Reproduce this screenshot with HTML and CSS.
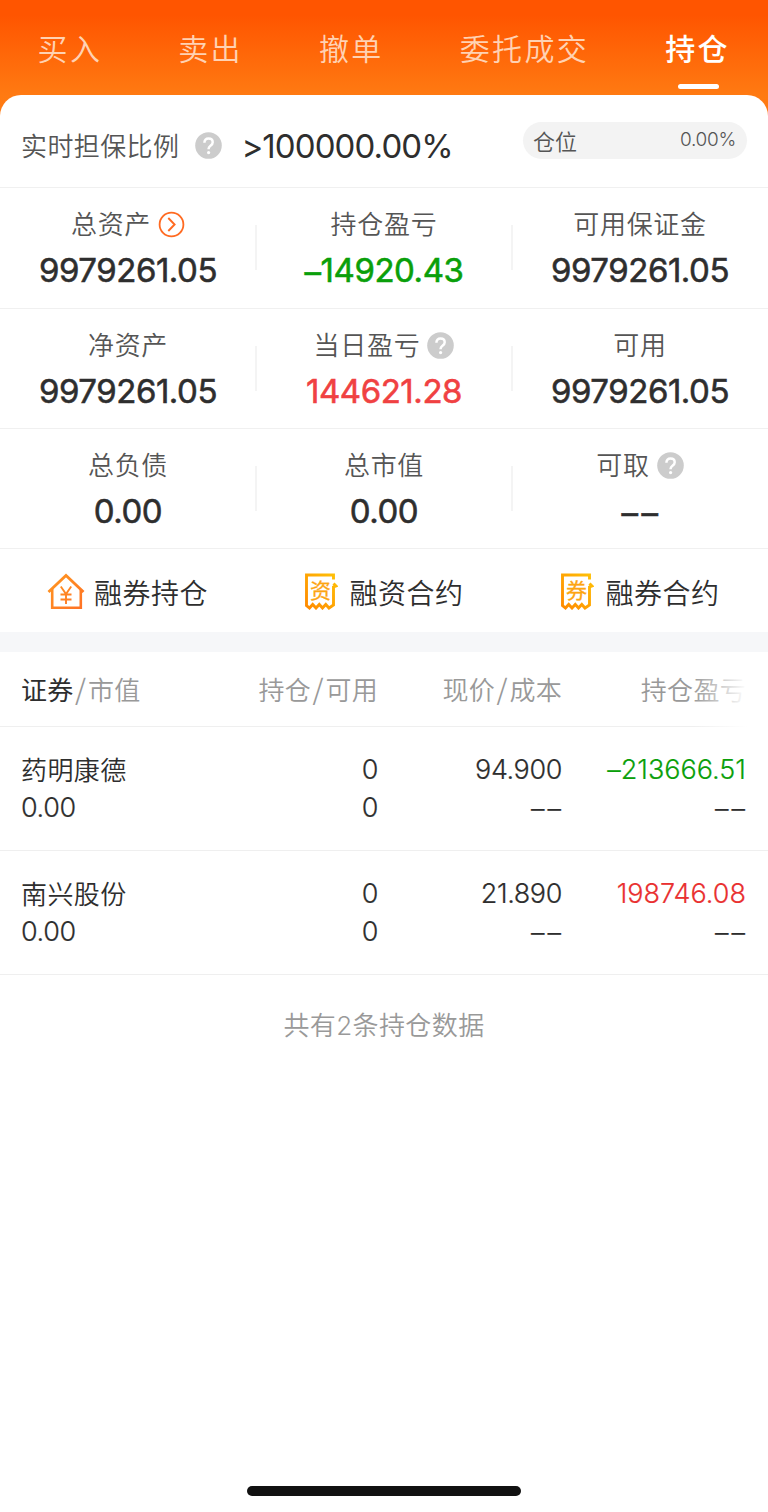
FILE: index.html
```html
<!DOCTYPE html>
<html lang="zh-CN">
<head>
<meta charset="utf-8">
<title>持仓</title>
<link rel="stylesheet" href="styles.css">
</head>
<body>
<svg class="defs" width="0" height="0" aria-hidden="true">
  <defs>
    <linearGradient id="gold" x1="0" y1="1" x2="1" y2="0"><stop offset="0" stop-color="#ff8a00"/><stop offset="1" stop-color="#ffc107"/></linearGradient>
    <linearGradient id="orange" gradientUnits="userSpaceOnUse" x1="0" y1="0" x2="38" y2="38"><stop offset="0" stop-color="#ff9a1f"/><stop offset="1" stop-color="#ff7026"/></linearGradient>
    <symbol id="help" viewBox="0 0 27 27">
      <circle cx="13.5" cy="13.5" r="13.3" fill="#ccc"/>
      <path d="M9.400 10.800C9.400 8.100 11 6.600 13.500 6.600c2.500 0 4.200 1.500 4.200 3.600 0 1.700-.9 2.600-2.200 3.500-1.400 1-1.900 1.600-1.900 3v.5" fill="none" stroke="#fff" stroke-width="2.500"/>
      <circle cx="13.600" cy="20.600" r="1.600" fill="#fff"/>
    </symbol>
    <symbol id="ticket" viewBox="0 0 34 38">
      <path d="M29.500 7.500V3H2.500V33.500L5.500 36l3.200-3.500L12 36l3.300-3.500L18.500 36l3.300-3.500L25 36l4.500-3V15l2.500-1-2.500-2.500" fill="none" stroke="url(#gold)" stroke-width="2.900"/>
    </symbol>
  </defs>
</svg>
<div class="page">
  <nav class="tabs">
    <span class="tab">买入</span>
    <span class="tab">卖出</span>
    <span class="tab">撤单</span>
    <span class="tab">委托成交</span>
    <span class="tab active">持仓</span>
  </nav>
  <main class="card">
    <section class="ratio">
      <span class="ratio-label">实时担保比例</span>
      <svg class="help" width="27" height="27"><use href="#help"/></svg>
      <span class="ratio-value">&gt;100000.00%</span>
      <div class="pill"><span class="pill-name">仓位</span><span class="pill-value">0.00%</span></div>
    </section>
    <section class="stats">
      <div class="stat"><div class="label"><span>总资产</span><svg class="arrow" width="27" height="27" viewBox="0 0 27 27"><circle cx="13.500" cy="13.500" r="11.900" fill="none" stroke="#ff6a21" stroke-width="1.800"/><path d="M10.300 7l6.300 6.500-6.300 6.500" fill="none" stroke="#ff6a21" stroke-width="1.900"/></svg></div><div class="value">9979261.05</div></div>
      <div class="stat"><div class="label"><span>持仓盈亏</span></div><div class="value down"><span class="minus">–</span>14920.43</div></div>
      <div class="stat"><div class="label"><span>可用保证金</span></div><div class="value">9979261.05</div></div>
    </section>
    <section class="stats">
      <div class="stat"><div class="label"><span>净资产</span></div><div class="value">9979261.05</div></div>
      <div class="stat"><div class="label"><span>当日盈亏</span><svg class="help" width="27" height="27"><use href="#help"/></svg></div><div class="value up">144621.28</div></div>
      <div class="stat"><div class="label"><span>可用</span></div><div class="value">9979261.05</div></div>
    </section>
    <section class="stats">
      <div class="stat"><div class="label"><span>总负债</span></div><div class="value">0.00</div></div>
      <div class="stat"><div class="label"><span>总市值</span></div><div class="value">0.00</div></div>
      <div class="stat"><div class="label"><span>可取</span><svg class="help" width="27" height="27"><use href="#help"/></svg></div><div class="value dash"><span class="minus">––</span></div></div>
    </section>
    <section class="actions">
      <div class="action house">
        <svg width="38" height="38" viewBox="0 0 38 38"><path d="M1.500 20L19 3.500 36.500 20" fill="none" stroke="url(#orange)" stroke-width="2.800"/><path d="M5.200 17v18.700h28.600V17" fill="none" stroke="url(#orange)" stroke-width="2.600"/><path d="M13.800 14.500l5.200 7.500 5.200-7.500M19 22v10M13.500 22.500h11M13.500 27.500h11" fill="none" stroke="url(#orange)" stroke-width="1.900"/></svg>
        <span>融券持仓</span>
      </div>
      <div class="action">
        <svg class="ticket" width="34" height="38" viewBox="0 0 34 38"><use href="#ticket"/><text class="ticket-text" x="16.500" y="25.500">资</text></svg>
        <span>融资合约</span>
      </div>
      <div class="action">
        <svg class="ticket" width="34" height="38" viewBox="0 0 34 38"><use href="#ticket"/><text class="ticket-text" x="16.500" y="25.500">券</text></svg>
        <span>融券合约</span>
      </div>
    </section>
  </main>
  <section class="holdings">
    <div class="row head">
      <span><b>证券</b><i>/</i>市值</span><span>持仓<i>/</i>可用</span><span>现价<i>/</i>成本</span><span>持仓盈亏</span>
    </div>
    <div class="row item">
      <div><p class="name">药明康德</p><p>0.00</p></div>
      <div><p>0</p><p>0</p></div>
      <div><p>94.900</p><p class="dash">––</p></div>
      <div><p class="down"><span class="minus">–</span>213666.51</p><p class="dash">––</p></div>
    </div>
    <div class="row item">
      <div><p class="name">南兴股份</p><p>0.00</p></div>
      <div><p>0</p><p>0</p></div>
      <div><p>21.890</p><p class="dash">––</p></div>
      <div><p class="up">198746.08</p><p class="dash">––</p></div>
    </div>
    <p class="total">共有2条持仓数据</p>
  </section>
  <div class="home-bar"></div>
</div>
</body>
</html>
```
FILE: styles.css
```css
* { box-sizing: border-box; }
body { margin: 0; background: #fff; }
p { margin: 0; }
b, i { font-style: normal; font-weight: inherit; }
.defs { display: block; }
.page {
  width: 768px; height: 1512px; display: flex; flex-direction: column; overflow: hidden;
  font-family: Inter, "Noto Sans CJK SC", sans-serif; font-weight: 350; color: #2e2e2e;
  background: linear-gradient(#ff5500 0, #ff5500 15px, #ff7a12 95px, #ff7c14 125px, #fff 125px);
}
.tabs {
  height: 95px; flex: none; padding: 0 38px 0 37.500px; display: flex; justify-content: space-between;
  font-size: 30px; line-height: 99px; letter-spacing: 2.4px; color: #ffd2b3; white-space: nowrap;
}
.tab.active { color: #fff; font-weight: 500; position: relative; }
.tab.active::after {
  content: ""; position: absolute; left: 13px; top: 84px; width: 41px; height: 5px;
  border-radius: 3px; background: #fff;
}
.card { flex: none; background: #fff; border-radius: 21px 21px 0 0; }
.ratio { height: 93px; padding: 0 21px; display: flex; align-items: center; border-bottom: 1px solid #f0f0f0; }
.ratio-label { font-size: 26px; letter-spacing: .4px; color: #555; line-height: 40px; padding-top: 12px; }
.ratio .help { margin: 9px 0 0 16px; }
.ratio-value { font-size: 33px; font-weight: 400; letter-spacing: -.9px; margin-left: 19px; padding-top: 9px; }
.pill {
  width: 224px; height: 37px; margin: 0 0 1px auto; padding: 0 11px 2px 10px; border-radius: 19px; background: #f3f3f3;
  display: flex; align-items: center; justify-content: space-between; color: #555; font-size: 22px;
}
.pill-value { font-size: 19px; letter-spacing: -.3px; }
.stats { height: 120px; display: grid; grid-template-columns: repeat(3, 1fr); border-bottom: 1px solid #f0f0f0; }
.ratio + .stats { height: 121px; }
.stat { padding-top: 18px; text-align: center; position: relative; }
.stat + .stat::before { content: ""; position: absolute; left: -1px; top: 37px; width: 2px; height: 45px; background: #f4f4f4; }
.label {
  height: 36px; display: flex; justify-content: center; align-items: center; color: #555;
  font-size: 26px; line-height: 36px; letter-spacing: .7px;
}
.label span { padding-top: 2px; }
.label svg { margin-left: 7px; }
.value { font-size: 33px; line-height: 56px; font-weight: 400; letter-spacing: -.45px; -webkit-text-stroke: .55px currentColor; }
.value.dash { letter-spacing: 3.500px; padding-left: 3px; }
.minus { position: relative; top: 2px; }
.down { color: #0a9f0a; }
.up { color: #f04142; }
.actions { height: 83px; display: grid; grid-template-columns: repeat(3, 1fr); }
.action { display: flex; justify-content: center; align-items: center; gap: 9px; font-size: 28px; letter-spacing: .5px; }
.action span { padding-top: 2px; }
.house { padding-right: 1px; }
.ticket { margin-right: 2px; }
.ticket-text { font-family: "Noto Sans CJK SC", sans-serif; font-size: 21px; font-weight: 400; letter-spacing: 0; text-anchor: middle; fill: #fda512; stroke: #fda512; stroke-width: .3px; }
.holdings { flex: 1; border-top: 20px solid #f6f7f9; background: #fff; }
.row { display: grid; grid-template-columns: 178px 179px 184px 184px; padding-left: 21px; border-bottom: 1px solid #efefef; }
.row > * + * { text-align: right; }
.head { height: 75px; line-height: 77px; font-size: 26px; letter-spacing: .3px; color: #999; position: relative; }
.head b { color: #2e2e2e; font-weight: 400; }
.head i { font-family: "Noto Sans CJK SC", sans-serif; padding: 0 1.500px; font-size: 28px; line-height: 1; }
.head::after {
  content: ""; position: absolute; right: 0; top: 0; width: 75px; height: 76px;
  background: linear-gradient(to right, transparent, #fff 72%);
}
.item { height: 124px; padding-top: 24px; font-size: 27px; line-height: 38px; letter-spacing: -.4px; -webkit-text-stroke: .2px currentColor; }
.item .name { font-size: 26px; letter-spacing: .4px; padding-top: 1px; margin-bottom: -1px; -webkit-text-stroke: 0; }
.item .dash { letter-spacing: 3px; margin-right: -2px; padding-top: 1px; }
.item .down { letter-spacing: 0; }
.item .up { color: #e93030; letter-spacing: 0; }
.total { padding-top: 31px; text-align: center; font-size: 26px; line-height: 40px; letter-spacing: .4px; color: #999; }
.home-bar { flex: none; width: 274px; height: 10px; margin: 0 auto 16px; border-radius: 5px; background: #111; }
```
